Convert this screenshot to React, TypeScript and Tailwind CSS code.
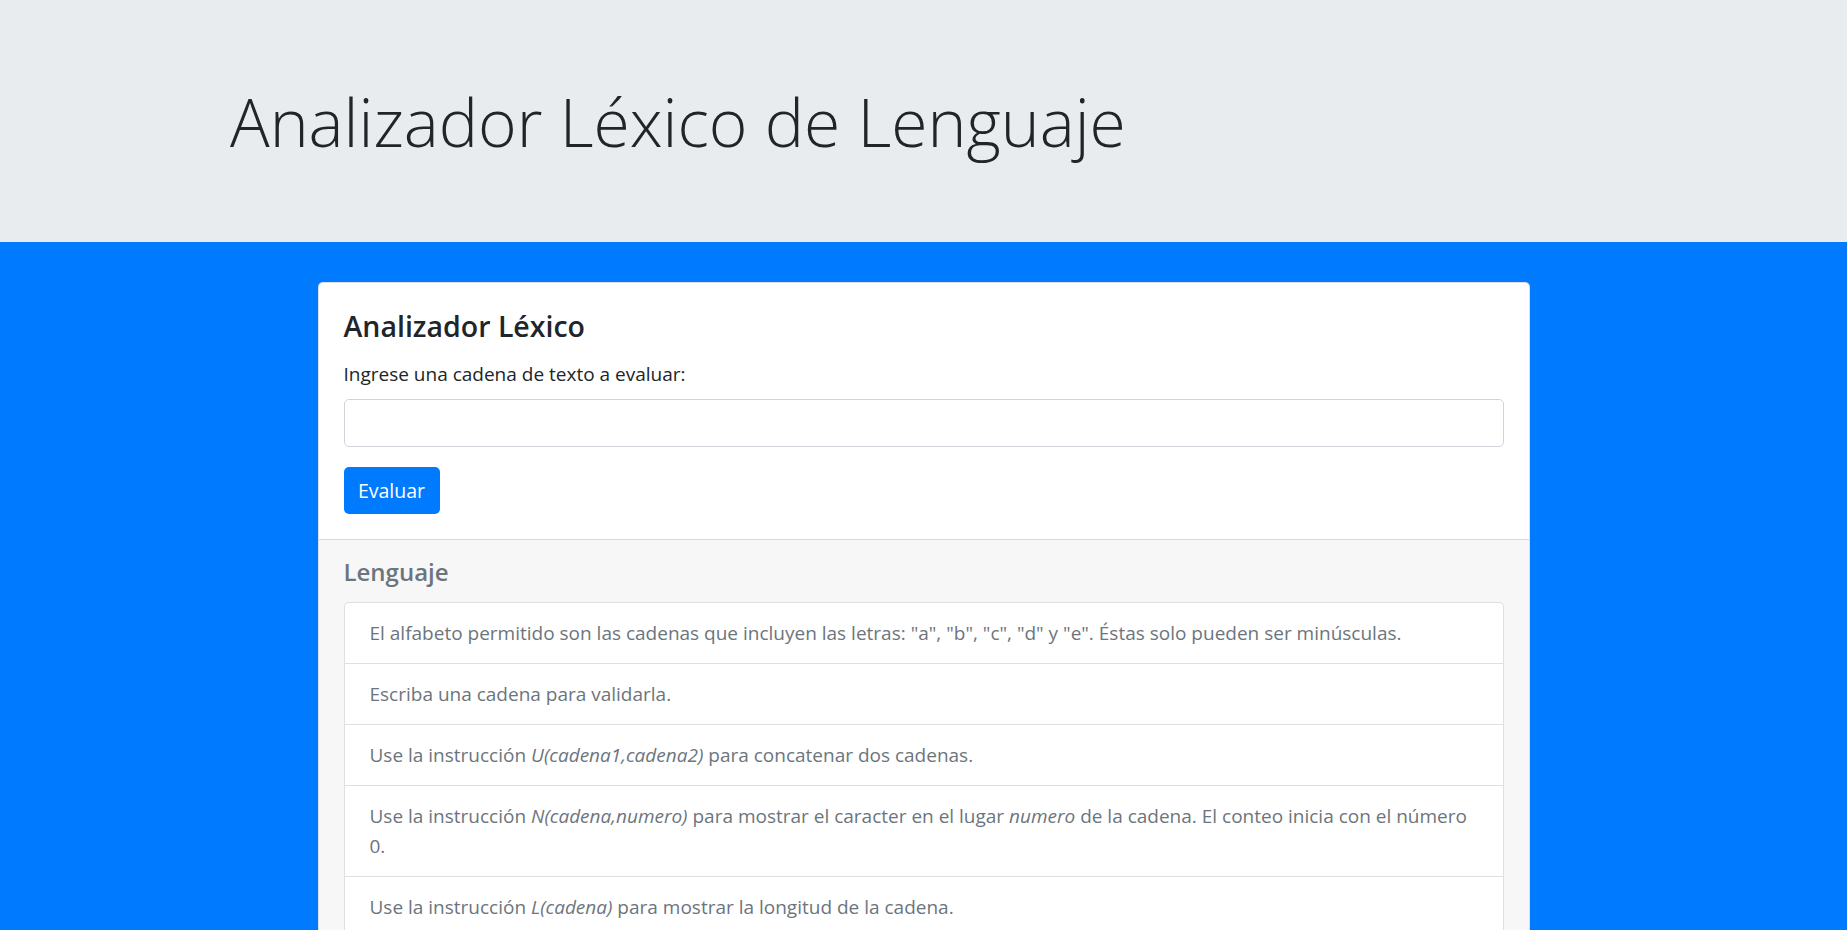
import React from "react";

const items: React.ReactNode[] = [
  <>El alfabeto permitido son las cadenas que incluyen las letras: "a", "b", "c", "d" y "e". Éstas solo pueden ser minúsculas.</>,
  <>Escriba una cadena para validarla.</>,
  <>
    Use la instrucción <em>U(cadena1,cadena2)</em> para concatenar dos cadenas.
  </>,
  <span className="whitespace-nowrap">
    Use la instrucción <em>N(cadena,numero)</em> para mostrar el caracter en el lugar <em>numero</em> de la cadena. El conteo inicia con el número
    <br />
    0.
  </span>,
  <>
    Use la instrucción <em>L(cadena)</em> para mostrar la longitud de la cadena.
  </>,
];

export default function App() {
  return (
    <div
      className="min-h-screen bg-[#007bff] text-[#212529]"
      style={{ fontFamily: '"Open Sans", "Noto Sans", sans-serif' }}
    >
      <header className="bg-[#e9ecef] py-[80px]">
        <div className="mx-auto w-[1425px] px-[19px]">
          <h1 className="text-[66px] font-light leading-[82px] text-[#212529]">
            Analizador Léxico de Lenguaje
          </h1>
        </div>
      </header>

      <main className="pt-[40px] pb-[40px]">
        <div className="mx-auto w-[1212px] overflow-hidden rounded-[5px] border border-[rgba(0,0,0,0.125)] bg-white">
          <div className="p-[25px]">
            <h4 className="mb-[15px] text-[28.5px] font-semibold leading-[36px]">Analizador Léxico</h4>
            <label className="mb-[10px] block text-[19px] leading-[30px]">
              Ingrese una cadena de texto a evaluar:
            </label>
            <input
              type="text"
              className="mb-[20px] block h-[48px] w-full rounded-[5px] border border-[#ced4da] bg-white px-[15px] text-[19px] outline-none"
            />
            <button className="flex h-[47px] w-[96px] items-center justify-center rounded-[5px] bg-[#007bff] text-[19.5px] text-white">
              Evaluar
            </button>
          </div>
          <div className="border-t border-[rgba(0,0,0,0.125)] bg-[#f7f7f7] px-[25px] pt-[17px] pb-[25px]">
            <h5 className="mb-[15px] text-[24px] font-semibold leading-[30px] text-[#6c757d]">Lenguaje</h5>
            <ul className="overflow-hidden rounded-[5px] border border-[rgba(0,0,0,0.125)] bg-white">
              {items.map((it, i) => (
                <li
                  key={i}
                  className="border-b border-[rgba(0,0,0,0.125)] px-[25px] py-[15px] text-[19px] leading-[30px] text-[#6c757d] last:border-b-0"
                >
                  {it}
                </li>
              ))}
            </ul>
          </div>
        </div>
      </main>
    </div>
  );
}
